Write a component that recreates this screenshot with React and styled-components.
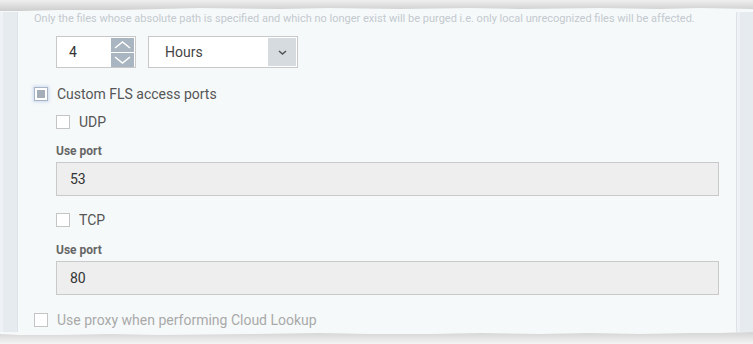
import React from 'react'
import styled, { createGlobalStyle } from 'styled-components'

const Global = createGlobalStyle`
  *, *::before, *::after {
    box-sizing: border-box;
  }
  html, body {
    margin: 0;
    padding: 0;
    background: #ffffff;
  }
  body {
    font-family: Roboto, "Liberation Sans", sans-serif;
  }
`

const Page = styled.div`
  width: 753px;
  height: 344px;
  display: flex;
  flex-direction: column;
  overflow: hidden;
  background: #ffffff;
`

const Edge = styled.svg`
  display: block;
  flex: 0 0 auto;
  width: 753px;
  height: ${p => p.h}px;
`

const Middle = styled.div`
  flex: 1 1 auto;
  display: flex;
  min-height: 0;
`

const Strip = styled.div`
  flex: 0 0 ${p => p.w}px;
  background: linear-gradient(to right, #eef2f6 0, #eef2f6 3px, #e6ebf0 3px, #e6ebf0 100%);
  border-${p => p.side}: 1px solid #dde3e9;
`

const Panel = styled.div`
  flex: 1 1 auto;
  background: #f6f9fa;
  padding: 0 0 0 16px;
  display: flex;
  flex-direction: column;
`

const Hint = styled.div`
  font-size: 11px;
  color: #c3c9cf;
  line-height: 13px;
  white-space: nowrap;
`

const Indent = styled.div`
  padding-left: 22px;
  display: flex;
  flex-direction: column;
`

const Row = styled.div`
  display: flex;
  align-items: center;
  gap: 12px;
  margin-top: ${p => p.mt || 0}px;
`

const Spinner = styled.div`
  width: 80px;
  height: 32px;
  border: 1px solid #c8c8c8;
  background: #ffffff;
  display: flex;
  align-items: center;
  justify-content: space-between;
  padding: 0 1px 0 12px;
  font-size: 14px;
  color: #333;
`

const SpinButtons = styled.div`
  display: flex;
  flex-direction: column;
  gap: 1px;
`

const SpinButton = styled.div`
  width: 23px;
  height: 14px;
  background: #a9b5c0;
  display: flex;
  align-items: center;
  justify-content: center;
`

const Select = styled.div`
  width: 150px;
  height: 32px;
  border: 1px solid #c8c8c8;
  background: #ffffff;
  display: flex;
  align-items: center;
  justify-content: space-between;
  padding: 0 1px 0 16px;
  font-size: 14px;
  color: #444;
`

const SelectButton = styled.div`
  width: 28px;
  height: 28px;
  background: #d6dbe0;
  display: flex;
  align-items: center;
  justify-content: center;
`

const CheckRow = styled.label`
  display: flex;
  align-items: center;
  gap: 9px;
  height: 16px;
  line-height: 16px;
  margin-top: ${p => p.mt || 0}px;
  font-size: 14px;
  color: ${p => (p.muted ? '#a9a9a9' : '#555555')};
`

const Box = styled.span`
  width: 14px;
  height: 14px;
  border: 1px solid ${p => (p.checked ? '#a8b3c4' : '#c4c4c4')};
  background: #ffffff;
  display: flex;
  align-items: center;
  justify-content: center;
  box-shadow: ${p => (p.checked ? '0 0 3px 1px rgba(120, 160, 220, 0.35)' : 'none')};

  &::after {
    content: '';
    display: ${p => (p.checked ? 'block' : 'none')};
    width: 8px;
    height: 8px;
    background: #a5adb8;
  }
`

const FieldLabel = styled.div`
  font-size: 12px;
  font-weight: bold;
  line-height: 14px;
  color: #666;
  margin-top: ${p => p.mt || 0}px;
`

const PortInput = styled.div`
  width: 663px;
  height: 34px;
  margin-top: 4px;
  border: 1px solid #c9c9c9;
  background: #eeeeee;
  display: flex;
  align-items: center;
  padding-left: 13px;
  font-size: 14px;
  color: #333;
`

function Chevron ({ dir, color, w, h, sw = 1.5 }) {
  const d = dir === 'up' ? `M1 ${h - 1} L${w / 2} 1 L${w - 1} ${h - 1}` : `M1 1 L${w / 2} ${h - 1} L${w - 1} 1`
  return (
    <svg width={w} height={h} viewBox={`0 0 ${w} ${h}`}>
      <path d={d} fill="none" stroke={color} strokeWidth={sw} />
    </svg>
  )
}

function TopEdge () {
  return (
    <Edge h={12} viewBox="0 0 753 12">
      <defs>
        <linearGradient id="tg" x1="0" y1="0" x2="0" y2="1">
          <stop offset="0" stopColor="#efefef" />
          <stop offset="1" stopColor="#cdcdcd" />
        </linearGradient>
      </defs>
      <rect width="753" height="12" fill="#f6f9fa" />
      <path
        d="M0 0 H753 V9 L700 8 L660 9 L600 8 L520 9 L470 8 L400 9 L330 8 L280 9 L200 8 L160 9 L120 10 L60 10 L20 11 L0 11 Z"
        fill="url(#tg)"
      />
    </Edge>
  )
}

function BottomEdge () {
  return (
    <Edge h={12} viewBox="0 0 753 12">
      <defs>
        <linearGradient id="bg" x1="0" y1="0" x2="0" y2="1">
          <stop offset="0" stopColor="#d4d4d4" />
          <stop offset="1" stopColor="#f4f4f4" />
        </linearGradient>
      </defs>
      <rect width="753" height="12" fill="url(#bg)" />
      <path
        d="M0 0 H753 V0 L720 1 L690 1 L640 2 L590 1 L540 2 L480 1 L430 2 L370 2 L320 1 L250 2 L160 3 L110 2 L60 3 L20 3 L0 2 Z"
        fill="#f6f9fa"
      />
    </Edge>
  )
}

export default function App () {
  return (
    <Page>
      <Global />
      <TopEdge />
      <Middle>
        <Strip w={18} side="right" />
        <Panel>
          <Hint>
            Only the files whose absolute path is specified and which no longer exist will be purged i.e. only local unrecognized files will be affected.
          </Hint>
          <Indent>
            <Row mt={11}>
              <Spinner>
                4
                <SpinButtons>
                  <SpinButton><Chevron dir="up" color="#ffffff" w={17} h={8} /></SpinButton>
                  <SpinButton><Chevron dir="down" color="#ffffff" w={17} h={8} /></SpinButton>
                </SpinButtons>
              </Spinner>
              <Select>
                Hours
                <SelectButton><Chevron dir="down" color="#555" w={9} h={5} sw={1.6} /></SelectButton>
              </Select>
            </Row>
          </Indent>
          <CheckRow mt={18}>
            <Box checked />
            Custom FLS access ports
          </CheckRow>
          <Indent>
            <CheckRow mt={12}>
              <Box />
              UDP
            </CheckRow>
            <FieldLabel mt={14}>Use port</FieldLabel>
            <PortInput>53</PortInput>
            <CheckRow mt={16}>
              <Box />
              TCP
            </CheckRow>
            <FieldLabel mt={15}>Use port</FieldLabel>
            <PortInput>80</PortInput>
          </Indent>
          <CheckRow mt={17} muted>
            <Box />
            Use proxy when performing Cloud Lookup
          </CheckRow>
        </Panel>
        <Strip w={17} side="left" />
      </Middle>
      <BottomEdge />
    </Page>
  )
}
